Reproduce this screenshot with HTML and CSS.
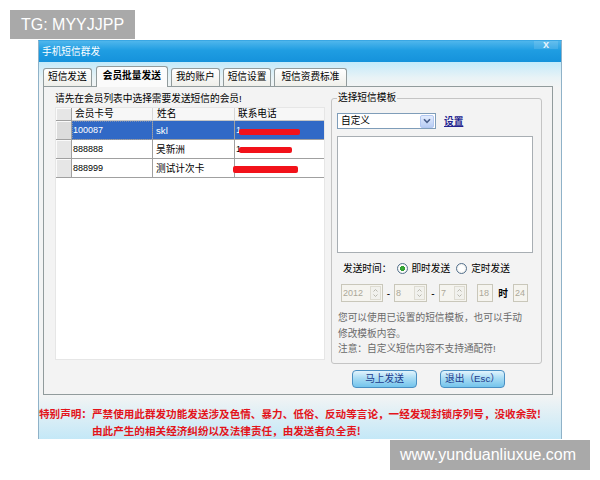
FILE: index.html
```html
<!DOCTYPE html>
<html lang="zh-CN">
<head>
<meta charset="utf-8">
<title>手机短信群发</title>
<link rel="stylesheet" href="styles.css">
</head>
<body>
<div class="window">
  <div class="titlebar">
    <span class="title">手机短信群发</span>
    <span class="close">x</span>
  </div>
  <div class="winbody">
    <div class="tabs">
      <div class="tab">短信发送</div>
      <div class="tab active">会员批量发送</div>
      <div class="tab">我的账户</div>
      <div class="tab">短信设置</div>
      <div class="tab wide">短信资费标准</div>
    </div>
    <div class="panel">
      <div class="left">
        <div class="hint">请先在会员列表中选择需要发送短信的会员!</div>
        <div class="grid">
          <div class="row head">
            <div class="rh"></div>
            <div class="c c1">会员卡号</div>
            <div class="c c2">姓名</div>
            <div class="c c3">联系电话</div>
          </div>
          <div class="row selected">
            <div class="rh"></div>
            <div class="c c1 focus">100087</div>
            <div class="c c2">skl</div>
            <div class="c c3"><span class="lead">1</span><span class="redact redact-a"></span></div>
          </div>
          <div class="row">
            <div class="rh"></div>
            <div class="c c1">888888</div>
            <div class="c c2">吴新洲</div>
            <div class="c c3"><span class="lead">1</span><span class="redact redact-b"></span></div>
          </div>
          <div class="row">
            <div class="rh"></div>
            <div class="c c1">888999</div>
            <div class="c c2">测试计次卡</div>
            <div class="c c3"><span class="redact redact-c"></span></div>
          </div>
        </div>
      </div>
      <div class="right">
        <fieldset class="group">
          <legend>选择短信模板</legend>
          <div class="tpl-row">
            <div class="select">
              <span class="select-text">自定义</span>
              <span class="select-btn"><svg width="8" height="6" viewBox="0 0 8 6"><path d="M1 1.2 L4 4.4 L7 1.2" fill="none" stroke="#4a5f8a" stroke-width="1.6"/></svg></span>
            </div>
            <a class="link">设置</a>
          </div>
          <div class="textarea"></div>
          <div class="time-row">
            <span class="label">发送时间：</span>
            <span class="radio checked"></span><span class="rtext">即时发送</span>
            <span class="radio second"></span><span class="rtext">定时发送</span>
          </div>
          <div class="date-row">
            <div class="spin w-year"><span class="spin-val">2012</span><span class="spin-btns"><svg width="9" height="14" viewBox="0 0 9 14"><path d="M2.5 5.5 L4.5 3.5 L6.5 5.5" fill="none" stroke="#b9b8ae" stroke-width="1"/><path d="M2.5 8.5 L4.5 10.5 L6.5 8.5" fill="none" stroke="#b9b8ae" stroke-width="1"/></svg></span></div>
            <span class="dash">-</span>
            <div class="spin w-month"><span class="spin-val">8</span><span class="spin-btns"><svg width="9" height="14" viewBox="0 0 9 14"><path d="M2.5 5.5 L4.5 3.5 L6.5 5.5" fill="none" stroke="#b9b8ae" stroke-width="1"/><path d="M2.5 8.5 L4.5 10.5 L6.5 8.5" fill="none" stroke="#b9b8ae" stroke-width="1"/></svg></span></div>
            <span class="dash dash2">-</span>
            <div class="spin w-day"><span class="spin-val">7</span><span class="spin-btns"><svg width="9" height="14" viewBox="0 0 9 14"><path d="M2.5 5.5 L4.5 3.5 L6.5 5.5" fill="none" stroke="#b9b8ae" stroke-width="1"/><path d="M2.5 8.5 L4.5 10.5 L6.5 8.5" fill="none" stroke="#b9b8ae" stroke-width="1"/></svg></span></div>
            <div class="spin w-hour"><span class="spin-val">18</span></div>
            <span class="unit">时</span>
            <div class="spin w-min"><span class="spin-val">24</span></div>
          </div>
          <div class="note">您可以使用已设置的短信模板，也可以手动<br>修改模板内容。<br>注意：自定义短信内容不支持通配符!</div>
        </fieldset>
        <div class="actions">
          <div class="btn">马上发送</div>
          <div class="btn">退出（Esc）</div>
        </div>
      </div>
    </div>
    <div class="footer">
      <div class="l1">特别声明：严禁使用此群发功能发送涉及色情、暴力、低俗、反动等言论，一经发现封锁序列号，没收余款!</div>
      <div class="l2">由此产生的相关经济纠纷以及法律责任，由发送者负全责!</div>
    </div>
  </div>
</div>
<div class="stamp stamp-tg">TG: MYYJJPP</div>
<div class="stamp stamp-url">www.yunduanliuxue.com</div>
</body>
</html>
```

FILE: styles.css
```css
* { box-sizing: border-box; }
html, body { margin: 0; padding: 0; }
body {
  width: 600px;
  height: 480px;
  overflow: hidden;
  position: relative;
  background: #ffffff;
  padding: 40px 0 0 38px;
  font-family: "Liberation Sans", "Noto Sans CJK SC", sans-serif;
  font-size: 9.7px;
  color: #000;
}

/* watermarks */
.stamp {
  position: absolute;
  background: #a9a9a9;
  color: #ffffff;
  font-family: "Liberation Sans", Arial, sans-serif;
  font-size: 16px;
  white-space: nowrap;
}
.stamp-tg { left: 10px; top: 10px; width: 125px; height: 29px; line-height: 29px; padding-left: 11px; }
.stamp-url { left: 390px; top: 440px; width: 200px; height: 30px; line-height: 30px; padding-left: 10px; }

/* window */
.window {
  width: 524px;
  height: 399px;
  border: 1px solid #8fb2c8;
  border-top-color: #3aa7e4;
  display: flex;
  flex-direction: column;
  background: #f3f4f4;
}
.titlebar {
  height: 21px;
  flex: none;
  display: flex;
  justify-content: space-between;
  align-items: flex-start;
  background: linear-gradient(#4fb6ec, #1f9de2 45%, #1592db);
  color: #fff;
}
.title { padding-left: 3px; line-height: 20px; font-family: "Noto Sans CJK SC", sans-serif; }
.close {
  width: 24px;
  height: 8px;
  margin-right: 3px;
  font-family: "Liberation Sans", sans-serif;
  font-size: 11px;
  font-weight: bold;
  line-height: 6px;
  text-align: center;
  color: #e4f2fc;
  background: rgba(255,255,255,0.12);
}
.winbody {
  flex: 1;
  display: flex;
  flex-direction: column;
  background: linear-gradient(#c3eafa, #e9f3f6 16px, #f3f4f4 26px);
}

/* tabs */
.tabs {
  display: flex;
  align-items: flex-end;
  height: 20px;
  margin-top: 4px;
  padding-left: 4px;
  flex: none;
}
.tab {
  height: 18px;
  line-height: 16px;
  padding: 0 4px;
  margin-right: 3px;
  border: 1px solid #919b9c;
  border-bottom: none;
  border-radius: 3px 3px 0 0;
  background: linear-gradient(#ffffff, #efefea);
  white-space: nowrap;
}
.tab.wide { padding: 0 6px; }
.tab.active {
  position: relative;
  z-index: 1;
  height: 21px;
  margin-bottom: -1px;
  margin-left: 1px;
  padding: 0 6px;
  line-height: 18px;
  font-weight: bold;
  background: #fbfbfb;
}

/* panel */
.panel {
  flex: none;
  margin-left: 4px;
  width: 510px;
  height: 309px;
  border: 1px solid #919b9c;
  background: #f3f3f3;
  display: flex;
  gap: 6px;
  padding: 5px 10px 0 11px;
}
.left { width: 270px; flex: none; }
.hint { height: 14px; line-height: 14px; white-space: nowrap; }
.grid {
  margin-top: 1px;
  height: 253px;
  background: #ffffff;
  border: 1px solid #e6e6e6;
}
.row { display: flex; height: 19px; }
.row.head { height: 13px; }
.rh {
  width: 16px;
  flex: none;
  background: #e6e6e6;
  border-right: 1px solid #a0a0a0;
  border-bottom: 1px solid #a0a0a0;
  box-shadow: inset 1px 1px 0 #fafafa;
}
.c {
  display: flex;
  align-items: center;
  border-right: 1px solid #a0a0a0;
  border-bottom: 1px solid #a0a0a0;
  padding-left: 1px;
  font-size: 9px;
  white-space: nowrap;
}
.c1 { width: 81px; }
.c2 { width: 82px; padding-left: 3px; font-size: 9.7px; }
.c3 { flex: 1; padding-left: 1px; border-right: none; }
.row.head .c {
  background: #f7f7f7;
  border-right-color: #d6d6d6;
  border-bottom-color: #c4c4c4;
  padding-left: 3px;
  font-size: 9.7px;
  line-height: 12px;
}
.row.head .c2 { padding-left: 4px; }
.row.head .c3 { padding-left: 3px; }
.row.selected .c { background: #3169c6; color: #ffffff; }
.row.selected .rh { background: #dcdcdc; }
.focus { outline: 1px dotted #7f8fb0; outline-offset: -1px; }
.lead { flex: none; }
.redact { display: inline-block; flex: none; background: #f2121a; border-radius: 2px; margin-left: -2px; }
.redact-a { width: 61px; height: 6px; margin-top: 3px; }
.redact-b { width: 53px; height: 6px; margin-top: 1px; }
.redact-c { width: 65px; height: 7px; margin-left: -3px; margin-top: 2px; }

/* right group */
.right { width: 211px; flex: none; display: flex; flex-direction: column; }
.group {
  margin: 0;
  min-width: 0;
  padding: 0 5px 6px;
  border: 1px solid #c4c4c4;
  border-radius: 3px;
}
.group legend { padding: 0 1px; line-height: 12px; }
.tpl-row { display: flex; align-items: center; margin-top: 9px; }
.select {
  width: 99px;
  height: 16px;
  border: 1px solid #7f9db9;
  background: #ffffff;
  display: flex;
  align-items: center;
  padding: 0 1px 0 3px;
}
.select-text { flex: 1; line-height: 14px; }
.select-btn {
  width: 14px;
  height: 13px;
  display: flex;
  align-items: center;
  justify-content: center;
  border: 1px solid #b3c8f1;
  border-radius: 2px;
  background: linear-gradient(#e3ecfd, #b8cdf4);
}
.link {
  margin-left: 8px;
  color: #23238f;
  text-decoration: underline;
  font-weight: bold;
}
.textarea {
  margin-top: 7px;
  width: 196px;
  height: 117px;
  border: 1px solid #a8aeb3;
  background: #ffffff;
}
.time-row {
  display: flex;
  align-items: center;
  height: 16px;
  margin-top: 7px;
  padding-left: 6px;
  white-space: nowrap;
}
.radio {
  width: 11px;
  height: 11px;
  border-radius: 50%;
  border: 1px solid #53708d;
  background: radial-gradient(circle, #ffffff 40%, #e2e2dc 100%);
  margin-left: 6px;
  margin-right: 3px;
}
.radio.checked { background: radial-gradient(circle, #3dae3a 0, #2f9e2f 2.3px, #ffffff 2.8px, #e6e6e0 100%); }
.radio.second { margin-left: 6px; margin-right: 4px; }
.date-row {
  display: flex;
  align-items: center;
  height: 18px;
  margin-top: 8px;
  padding-left: 4px;
}
.spin {
  height: 18px;
  flex: none;
  display: flex;
  border: 1px solid #c9c7ba;
  background: #f5f4ef;
  color: #aca899;
  font-family: "Liberation Sans", sans-serif;
  font-size: 9px;
}
.spin-val { flex: 1; line-height: 16px; padding-left: 1px; }
.spin-btns {
  width: 11px;
  margin: 1px;
  display: flex;
  align-items: center;
  justify-content: center;
  background: #f1f1ed;
  border: 1px solid #dedcd2;
}
.w-year { width: 42px; }
.w-month { width: 33px; }
.w-day { width: 28px; }
.w-hour { width: 16px; margin-left: 10px; }
.w-min { width: 15px; }
.dash { width: 11px; text-align: center; font-family: "Liberation Sans", sans-serif; font-size: 10px; }
.dash2 { width: 12px; }
.unit { width: 20px; text-align: center; font-weight: bold; }
.note {
  margin-top: 8px;
  padding-left: 1px;
  line-height: 15.5px;
  color: #6a6a6a;
  white-space: nowrap;
}
.actions {
  display: flex;
  gap: 23px;
  padding-left: 21px;
  margin-top: 6px;
}
.btn {
  width: 65px;
  height: 18px;
  border: 1px solid #4a8fc2;
  border-radius: 4px;
  background: linear-gradient(#e2f4fd, #a9dcf4 45%, #74c4ec);
  color: #1d3b8c;
  text-align: center;
  line-height: 16px;
  white-space: nowrap;
}

/* footer */
.footer {
  flex: 1;
  padding-top: 10px;
  background: linear-gradient(#f3f4f4, #c4e8f7);
  color: #e3141b;
  font-family: "Noto Sans CJK SC", sans-serif;
  font-weight: bold;
  font-size: 10.6px;
  line-height: 17px;
  white-space: nowrap;
}
.footer .l2 { padding-left: 53px; }
```
